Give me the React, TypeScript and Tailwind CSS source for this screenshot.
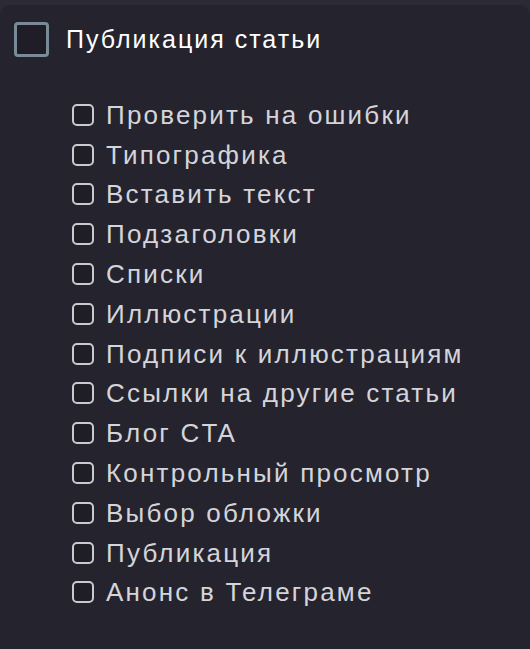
const items = [
  'Проверить на ошибки',
  'Типографика',
  'Вставить текст',
  'Подзаголовки',
  'Списки',
  'Иллюстрации',
  'Подписи к иллюстрациям',
  'Ссылки на другие статьи',
  'Блог CTA',
  'Контрольный просмотр',
  'Выбор обложки',
  'Публикация',
  'Анонс в Телеграме',
];

export default function App() {
  return (
    <div className="h-[649px] w-[530px] overflow-hidden bg-[#2c2b35] pt-[5px] font-['Liberation_Sans',Arial,sans-serif]">
      <div className="h-full rounded-t-[10px] bg-[#25242e] px-[14px] pt-[16px]">
        <label className="flex items-center gap-[17px]">
          <span className="h-[35px] w-[35px] shrink-0 rounded-[4px] border-[3px] border-[#7b8a9a] bg-[#1f1e27]" />
          <span className="text-[25px] leading-[36px] tracking-[2px] text-white">Публикация статьи</span>
        </label>
        <ul className="mt-[38px] flex flex-col pl-[58px]">
          {items.map(item => (
            <li key={item} className="flex h-[39.8px] items-center gap-[12px]">
              <span className="h-[22px] w-[22px] shrink-0 rounded-[5px] border-2 border-[#c9c9cf] bg-[#1f1e27]" />
              <span className="text-[26px] leading-[30px] tracking-[2.2px] text-[#d4d4da]">{item}</span>
            </li>
          ))}
        </ul>
      </div>
    </div>
  );
}
